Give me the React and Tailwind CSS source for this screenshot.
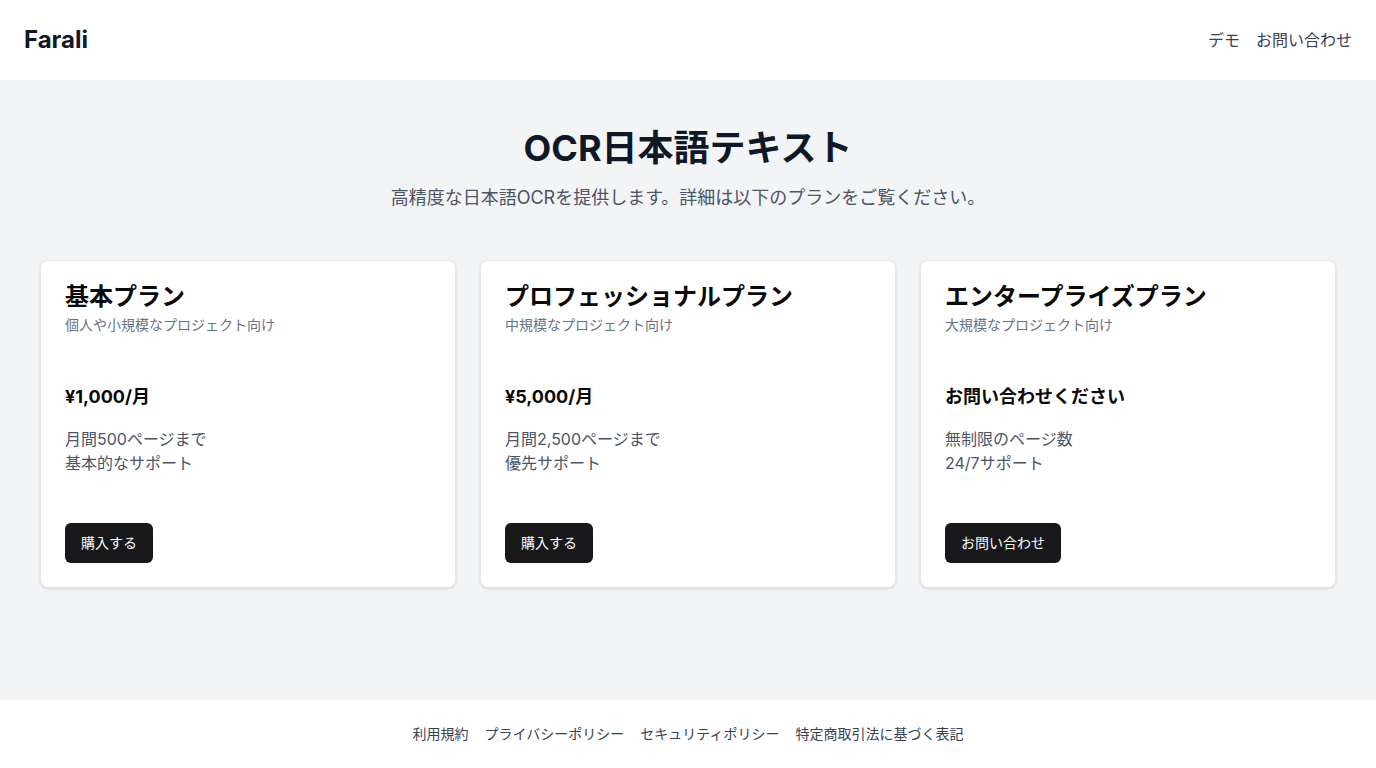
import React from "react";

const plans = [
  {
    name: "基本プラン",
    desc: "個人や小規模なプロジェクト向け",
    price: "¥1,000/月",
    features: ["月間500ページまで", "基本的なサポート"],
    cta: "購入する",
  },
  {
    name: "プロフェッショナルプラン",
    desc: "中規模なプロジェクト向け",
    price: "¥5,000/月",
    features: ["月間2,500ページまで", "優先サポート"],
    cta: "購入する",
  },
  {
    name: "エンタープライズプラン",
    desc: "大規模なプロジェクト向け",
    price: "お問い合わせください",
    features: ["無制限のページ数", "24/7サポート"],
    cta: "お問い合わせ",
  },
];

const font = {
  fontFamily: '"Inter", "Noto Sans CJK JP", sans-serif',
};

function PlanCard({ plan }) {
  return (
    <div className="flex flex-col rounded-lg border border-gray-200 bg-white text-[#0a0a0a] shadow-sm">
      {/* Header */}
      <div className="flex flex-col space-y-1.5 p-6">
        <h3 className="text-2xl font-bold leading-none">{plan.name}</h3>
        <p className="text-sm text-gray-500">{plan.desc}</p>
      </div>

      {/* Content */}
      <div className="flex-1 p-6">
        <p className="text-lg font-bold">{plan.price}</p>
        <ul className="mt-4 text-base text-gray-600">
          {plan.features.map((f) => (
            <li key={f}>{f}</li>
          ))}
        </ul>
      </div>

      {/* Footer */}
      <div className="flex items-center p-6">
        <button className="inline-flex h-10 items-center justify-center rounded-md bg-[#18181b] px-4 text-sm font-normal text-[#fafafa] hover:bg-[#27272a]">
          {plan.cta}
        </button>
      </div>
    </div>
  );
}

export default function App() {
  return (
    <div className="flex min-h-screen flex-col bg-white" style={font}>
      <header className="flex h-20 items-center justify-between bg-white px-6">
        <a href="#" className="text-2xl font-bold text-gray-900">
          Farali
        </a>
        <nav className="flex gap-4 text-base text-gray-700">
          <a href="#">デモ</a>
          <a href="#">お問い合わせ</a>
        </nav>
      </header>

      <main className="flex-1 bg-gray-100 px-10 pt-12 pb-12">
        <div className="text-center">
          <h1 className="text-4xl font-bold text-gray-900">OCR日本語テキスト</h1>
          <p className="mt-4 text-lg text-gray-600">
            高精度な日本語OCRを提供します。詳細は以下のプランをご覧ください。
          </p>
        </div>

        <div className="mt-12 grid grid-cols-3 gap-6">
          {plans.map((p) => (
            <PlanCard key={p.name} plan={p} />
          ))}
        </div>
      </main>

      <footer className="bg-white py-6">
        <nav className="flex justify-center gap-4 text-sm text-gray-700">
          <a href="#">利用規約</a>
          <a href="#">プライバシーポリシー</a>
          <a href="#">セキュリティポリシー</a>
          <a href="#">特定商取引法に基づく表記</a>
        </nav>
      </footer>
    </div>
  );
}
